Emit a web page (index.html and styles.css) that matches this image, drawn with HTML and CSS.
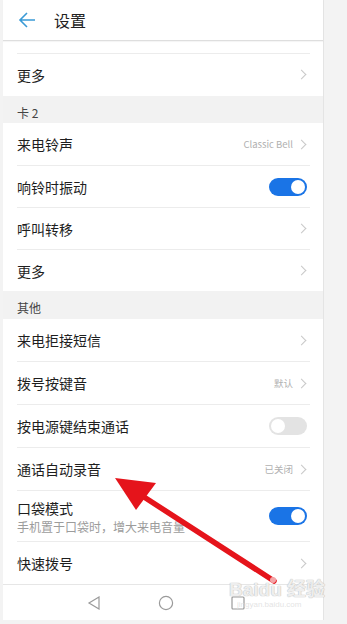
FILE: index.html
```html
<!DOCTYPE html>
<html lang="zh">
<head>
<meta charset="utf-8">
<title>设置</title>
<link rel="stylesheet" href="styles.css">
</head>
<body>
<div class="phone">
  <header class="topbar">
    <svg class="back" width="18" height="18" viewBox="0 0 18 18"><path d="M17 9H2M9 2L2 9l7 7" fill="none" stroke="#3a9ad6" stroke-width="1.6"/></svg>
    <span class="title">设置</span>
  </header>
  <div class="partial"><div class="line"></div></div>
  <div class="group">
    <div class="row"><span class="label">更多</span><span class="chev"></span></div>
  </div>
  <div class="section">卡 2</div>
  <div class="group">
    <div class="row"><span class="label">来电铃声</span><span class="value">Classic Bell</span><span class="chev"></span></div>
    <div class="row"><span class="label">响铃时振动</span><span class="toggle on"></span></div>
    <div class="row"><span class="label">呼叫转移</span><span class="chev"></span></div>
    <div class="row"><span class="label">更多</span><span class="chev"></span></div>
  </div>
  <div class="section">其他</div>
  <div class="group g2">
    <div class="row"><span class="label">来电拒接短信</span><span class="chev"></span></div>
    <div class="row"><span class="label">拨号按键音</span><span class="value">默认</span><span class="chev"></span></div>
    <div class="row"><span class="label">按电源键结束通话</span><span class="toggle"></span></div>
    <div class="row"><span class="label">通话自动录音</span><span class="value">已关闭</span><span class="chev"></span></div>
    <div class="row tall"><div class="texts"><span class="label">口袋模式</span><span class="sub">手机置于口袋时，增大来电音量</span></div><span class="toggle on"></span></div>
    <div class="row"><span class="label">快速拨号</span><span class="chev"></span></div>
  </div>
  <nav class="navbar">
    <svg width="14" height="14" viewBox="0 0 14 14"><path d="M12 1L2 7l10 6z" fill="none" stroke="#9a9a9a" stroke-width="1.2"/></svg>
    <svg width="16" height="16" viewBox="0 0 16 16"><circle cx="8" cy="8" r="6.6" fill="none" stroke="#9a9a9a" stroke-width="1.2"/></svg>
    <svg width="14" height="14" viewBox="0 0 14 14"><rect x="1" y="1" width="12" height="12" rx="1" fill="none" stroke="#9a9a9a" stroke-width="1.2"/></svg>
  </nav>
</div>
<div class="watermark"><span class="wm-main">Baidu 经验</span><span class="wm-sub">jingyan.baidu.com</span></div>
<svg class="arrow" width="347" height="624" viewBox="0 0 347 624">
  <line x1="274" y1="581" x2="144" y2="497" stroke="#e5141b" stroke-width="5.5" stroke-linecap="round"/>
  <polygon points="115,478 156,483 136,510" fill="#e5141b"/>
  <circle cx="273" cy="580" r="3" fill="#f3a5a8"/>
</svg>
</body>
</html>
```
FILE: styles.css
```css
* { box-sizing: border-box; }
html, body { margin: 0; padding: 0; }
body {
  width: 347px;
  height: 624px;
  background: #f3f3f3;
  font-family: "Noto Sans CJK SC", "Noto Sans", sans-serif;
  color: #1e1e1e;
  position: relative;
  overflow: hidden;
}
.phone {
  margin-left: 3px;
  width: 321px;
  height: 620px;
  background: #fff;
  border-right: 1px solid #e4e4e4;
  display: flex;
  flex-direction: column;
}
.topbar {
  height: 41px;
  border-bottom: 1px solid #dedede;
  box-shadow: 0 1px 1px rgba(0,0,0,0.04);
  display: flex;
  align-items: center;
  padding-left: 15px;
  gap: 18px;
}
.back { display: block; }
.title { font-size: 16px; line-height: 1; color: #222; }
.partial { height: 13px; padding: 0 13px 0 14px; display: flex; align-items: flex-end; }
.partial .line { width: 100%; height: 1px; background: #ececec; }
.group { display: flex; flex-direction: column; }
.row {
  height: 42px;
  margin: 0 13px 0 14px;
  display: flex;
  align-items: center;
  border-top: 1px solid #ececec;
}
.row:first-child { border-top: none; }
.g2 .row { height: 43px; }
.g2 .row:first-child { height: 42px; }
.g2 .row.tall { height: 51px; }
.label { font-size: 14px; line-height: 16px; flex: 1; color: #1e1e1e; }
.texts { flex: 1; display: flex; flex-direction: column; gap: 4px; margin-top: 2px; }
.sub { font-size: 12px; line-height: 14px; color: #9c9c9c; }
.value { font-size: 9.5px; color: #b0b0b0; margin-right: 5px; }
.chev {
  width: 7px; height: 7px;
  border-top: 1px solid #c8c8c8;
  border-right: 1px solid #c8c8c8;
  transform: rotate(45deg);
  margin-right: 5px;
}
.section {
  height: 28px;
  background: #f2f2f2;
  font-size: 12px;
  line-height: 1;
  color: #444;
  display: flex;
  align-items: center;
  padding-left: 14px;
  padding-top: 6px;
}
.toggle {
  width: 38px; height: 18px;
  border-radius: 9px;
  background: #e3e3e3;
  position: relative;
  margin-right: 3px;
}
.toggle::after {
  content: "";
  position: absolute;
  top: 2px; left: 2px;
  width: 14px; height: 14px;
  border-radius: 50%;
  background: #fff;
}
.toggle.on { background: #1a74e6; }
.toggle.on::after { left: auto; right: 2px; }
.navbar {
  margin-top: auto;
  height: 36px;
  border-top: 1px solid #e6e6e6;
  display: flex;
  align-items: center;
  padding-left: 84px;
  gap: 57px;
}
.navbar svg { display: block; }
.watermark {
  position: absolute;
  left: 229px; top: 580px;
  display: flex; flex-direction: column;
  align-items: flex-start;
  pointer-events: none;
}
.wm-main {
  font-family: "Liberation Sans", "Noto Sans CJK SC", sans-serif;
  font-size: 19px; font-weight: bold; line-height: 1;
  color: rgba(255,255,255,0.75);
  text-shadow: 0 0 1px #bbb, 0 0 1px #bbb;
}
.wm-sub {
  font-family: "Liberation Sans", sans-serif;
  font-size: 8px; line-height: 1; margin-top: 2px; margin-left: 8px;
  color: rgba(220,220,220,0.8);
}
.arrow { position: absolute; left: 0; top: 0; pointer-events: none; }
```
